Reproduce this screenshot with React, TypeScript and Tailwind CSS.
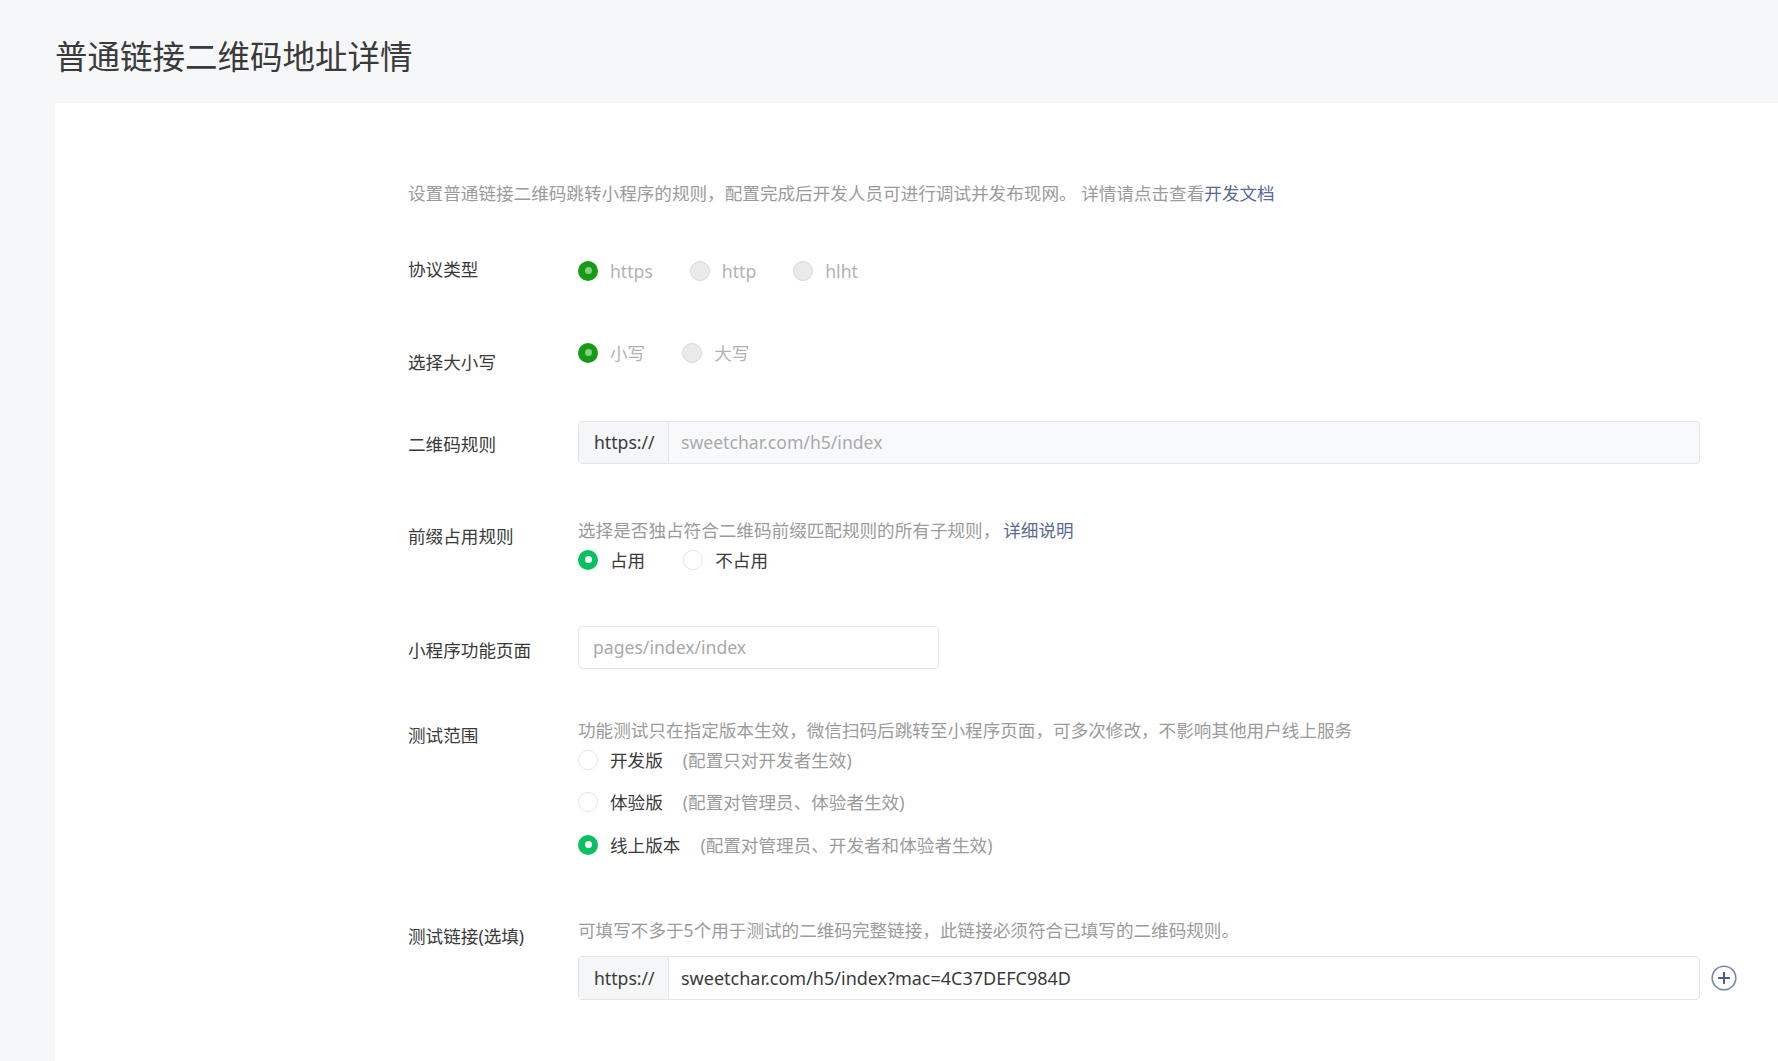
import React from "react";

type RadioKind = "disabledOn" | "disabledOff" | "on" | "off";

function RadioDot({ kind }: { kind: RadioKind }) {
  if (kind === "disabledOn")
    return (
      <span className="flex h-[20px] w-[20px] shrink-0 items-center justify-center rounded-full bg-[#179b16]">
        <span className="h-[7px] w-[7px] rounded-full bg-[#86cf85]" />
      </span>
    );
  if (kind === "disabledOff")
    return <span className="block h-[20px] w-[20px] shrink-0 rounded-full border border-[#d6d7da] bg-[#e9eaec]" />;
  if (kind === "on")
    return (
      <span className="flex h-[20px] w-[20px] shrink-0 items-center justify-center rounded-full bg-[#07c160]">
        <span className="h-[7px] w-[7px] rounded-full bg-white" />
      </span>
    );
  return <span className="block h-[20px] w-[20px] shrink-0 rounded-full border border-[#e3e4e6] bg-white" />;
}

function Option({ kind, label, muted }: { kind: RadioKind; label: string; muted?: boolean }) {
  return (
    <span className="flex items-center gap-3">
      <RadioDot kind={kind} />
      <span className={muted ? "text-[#b2b2b2]" : "text-[#3a3a3a]"}>{label}</span>
    </span>
  );
}

function PlusIcon() {
  return (
    <svg width="26" height="26" viewBox="0 0 26 26" fill="none">
      <circle cx="13" cy="13" r="11.8" stroke="#7b88b3" strokeWidth="1.6" />
      <path d="M13 7.8v10.4M7.8 13h10.4" stroke="#4d5b8c" strokeWidth="2" strokeLinecap="round" />
    </svg>
  );
}

export default function App() {
  return (
    <div className="flex min-h-screen flex-col bg-[#f6f7f9] font-['Noto_Sans','Noto_Sans_CJK_SC',sans-serif] text-[17.6px]">
      <h1 className="ml-[55px] mt-[37px] mb-[26px] text-[32.5px] font-normal leading-[40px] text-[#3a3a3a]">
        普通链接二维码地址详情
      </h1>
      <div className="ml-[55px] flex-1 bg-white pb-[80px] pl-[353px] pt-[75px]">
        <p className="leading-[30px] text-[#9b9b9b]">
          设置普通链接二维码跳转小程序的规则，配置完成后开发人员可进行调试并发布现网。 详情请点击查看
          <a className="text-[#576b95]">开发文档</a>
        </p>

        {/* 协议类型 */}
        <div className="mt-[46px] flex items-start">
          <div className="w-[170px] shrink-0 leading-[30px] text-[#3a3a3a]">协议类型</div>
          <div className="mt-[2px] flex h-[30px] items-center gap-[37px]">
            <Option kind="disabledOn" label="https" muted />
            <Option kind="disabledOff" label="http" muted />
            <Option kind="disabledOff" label="hlht" muted />
          </div>
        </div>

        {/* 选择大小写 */}
        <div className="mt-[52px] flex items-start">
          <div className="mt-[9px] w-[170px] shrink-0 leading-[30px] text-[#3a3a3a]">选择大小写</div>
          <div className="flex h-[30px] items-center gap-[37px]">
            <Option kind="disabledOn" label="小写" muted />
            <Option kind="disabledOff" label="大写" muted />
          </div>
        </div>

        {/* 二维码规则 */}
        <div className="mt-[44px] flex items-start">
          <div className="mt-[8px] w-[170px] shrink-0 leading-[30px] text-[#3a3a3a]">二维码规则</div>
          <div className="flex h-[43px] w-[1122px] overflow-hidden rounded-[4px] border border-[#e2e5ea] bg-[#f8f9fb]">
            <div className="flex w-[90px] shrink-0 items-center border-r border-[#e2e5ea] bg-[#f4f6f8] pl-[15px] text-[#3a3a3a]">
              https://
            </div>
            <div className="flex items-center pl-[12px] text-[#a9a9a9]">sweetchar.com/h5/index</div>
          </div>
        </div>

        {/* 前缀占用规则 */}
        <div className="mt-[51px] flex items-start">
          <div className="mt-[6px] w-[170px] shrink-0 leading-[30px] text-[#3a3a3a]">前缀占用规则</div>
          <div className="flex flex-col">
            <p className="leading-[30px] text-[#9b9b9b]">
              选择是否独占符合二维码前缀匹配规则的所有子规则，
              <a className="ml-[3px] text-[#576b95]">详细说明</a>
            </p>
            <div className="flex h-[30px] items-center gap-[38px]">
              <Option kind="on" label="占用" />
              <Option kind="off" label="不占用" />
            </div>
          </div>
        </div>

        {/* 小程序功能页面 */}
        <div className="mt-[51px] flex items-start">
          <div className="mt-[9px] w-[170px] shrink-0 leading-[30px] text-[#3a3a3a]">小程序功能页面</div>
          <div className="flex h-[43px] w-[361px] items-center rounded-[4px] border border-[#e2e5ea] bg-white pl-[14px] text-[#a9a9a9]">
            pages/index/index
          </div>
        </div>

        {/* 测试范围 */}
        <div className="mt-[46px] flex items-start">
          <div className="mt-[5px] w-[170px] shrink-0 leading-[30px] text-[#3a3a3a]">测试范围</div>
          <div className="flex flex-col gap-[12px]">
            <p className="-mb-[12px] leading-[30px] text-[#9b9b9b]">
              功能测试只在指定版本生效，微信扫码后跳转至小程序页面，可多次修改，不影响其他用户线上服务
            </p>
            <div className="flex h-[30px] items-center">
              <Option kind="off" label="开发版" />
              <span className="ml-5 text-[#9b9b9b]">(配置只对开发者生效)</span>
            </div>
            <div className="flex h-[30px] items-center">
              <Option kind="off" label="体验版" />
              <span className="ml-5 text-[#9b9b9b]">(配置对管理员、体验者生效)</span>
            </div>
            <div className="mt-[1px] flex h-[30px] items-center">
              <Option kind="on" label="线上版本" />
              <span className="ml-5 text-[#9b9b9b]">(配置对管理员、开发者和体验者生效)</span>
            </div>
          </div>
        </div>

        {/* 测试链接 */}
        <div className="mt-[55px] flex items-start">
          <div className="mt-[6px] w-[170px] shrink-0 leading-[30px] text-[#3a3a3a]">测试链接(选填)</div>
          <div className="flex flex-col">
            <p className="leading-[30px] text-[#9b9b9b]">
              可填写不多于5个用于测试的二维码完整链接，此链接必须符合已填写的二维码规则。
            </p>
            <div className="mt-[11px] flex items-center gap-[11px]">
              <div className="flex h-[44px] w-[1122px] overflow-hidden rounded-[4px] border border-[#e2e5ea] bg-white">
                <div className="flex w-[90px] shrink-0 items-center border-r border-[#e2e5ea] bg-[#f4f6f8] pl-[15px] text-[#3a3a3a]">
                  https://
                </div>
                <div className="flex items-center pl-[12px] text-[18px] text-[#3a3a3a]">sweetchar.com/h5/index?mac=4C37DEFC984D</div>
              </div>
              <PlusIcon />
            </div>
          </div>
        </div>
      </div>
    </div>
  );
}
